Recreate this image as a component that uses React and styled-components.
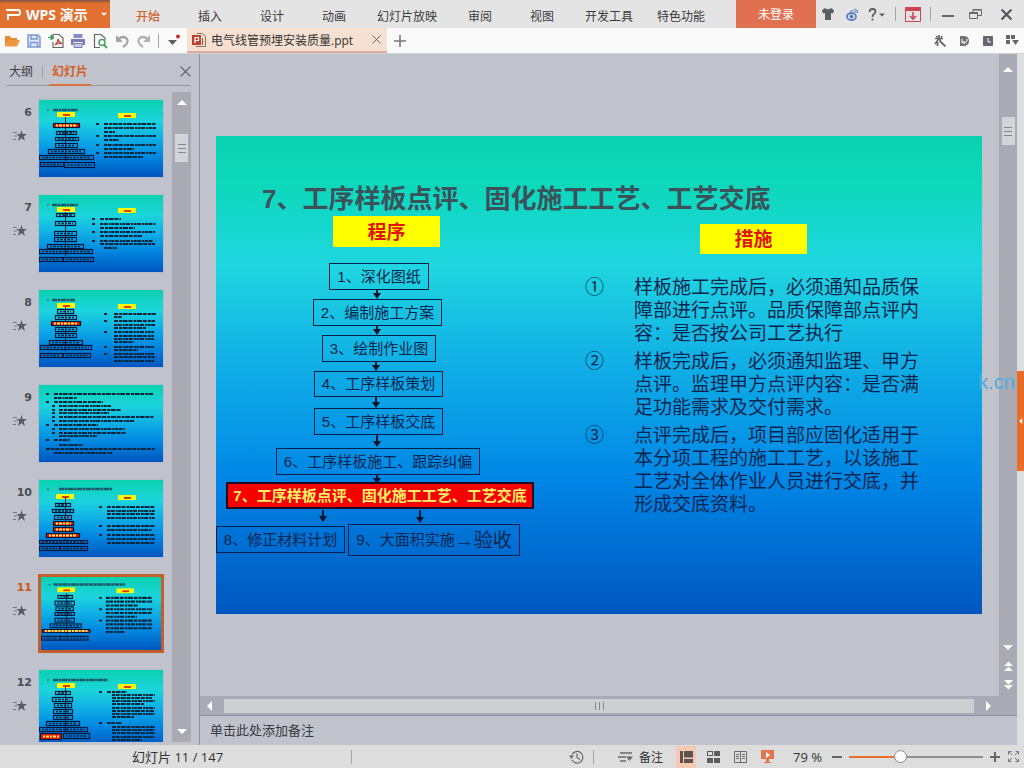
import React, { useState } from "react";
import styled, { createGlobalStyle } from "styled-components";

const GlobalStyle = createGlobalStyle`
  * {
    box-sizing: border-box;
  }
  body {
    margin: 0;
    overflow: hidden;
    font-family: "Open Sans", "Noto Sans CJK SC", sans-serif;
    font-size: 12px;
    color: #333;
  }
  button {
    margin: 0;
    padding: 0;
    border: 0;
    background: none;
    font: inherit;
    color: inherit;
  }
  svg {
    display: block;
  }
`;

const Page = styled.div`
  display: flex;
  flex-direction: column;
  height: 100vh;
  background-color: #c0c3cc;
`;

/* title bar */

const TitleBar = styled.header`
  display: flex;
  flex: none;
  height: 28px;
  padding-right: 3px;
  background-color: #e4e4e5;
`;

const AppButton = styled.button`
  display: flex;
  align-items: center;
  width: 110px;
  padding-left: 6px;
  gap: 5px;
  background-color: #e27030;
  color: #fff;
  font-size: 14px;
  font-weight: bold;
  white-space: nowrap;
  box-shadow: inset 0 3px 2px -1px #8a5a44;

  svg:last-child {
    margin-left: auto;
    margin-right: 3px;
  }
`;

const Menu = styled.nav`
  display: flex;
  flex: 1;
  padding-left: 7px;
`;

const MenuItem = styled.button`
  min-width: 62px;
  padding: 4px 12px 0;
  color: ${(props) => (props.$active ? "#d2622c" : "#3a3a3a")};
  font-weight: ${(props) => (props.$active ? 500 : 400)};
`;

const LoginButton = styled.button`
  width: 80px;
  background-color: #e07150;
  color: #fff;
`;

const IconButton = styled.button`
  display: flex;
  align-items: center;
  justify-content: center;
  width: ${(props) => props.$width || 24}px;
  background-color: ${(props) => (props.$active ? "#f6c9b2" : "transparent")};
`;

const Separator = styled.span`
  width: 1px;
  height: 14px;
  margin: 0 ${(props) => props.$space ?? 6}px;
  align-self: center;
  background-color: #a5a5a8;
`;

/* quick access bar */

const QuickBar = styled.div`
  display: flex;
  flex: none;
  height: 26px;
  background-color: #fafafb;
  border-bottom: 1px solid #cfd1d6;
`;

const QuickTools = styled.div`
  display: flex;
  width: 187px;
  padding-left: 1px;
`;

const FileTab = styled.div`
  display: flex;
  align-items: center;
  width: 200px;
  padding: 0 6px 0 5px;
  gap: 5px;
  background-color: #f5e0d1;
  border-bottom: 2px solid #dca9a4;
  white-space: nowrap;

  button {
    margin-left: auto;
  }
`;

const QuickRight = styled.div`
  display: flex;
  margin-left: auto;
`;

/* left panel */

const Body = styled.div`
  display: flex;
  flex: 1;
  min-height: 0;
`;

const SidePanel = styled.aside`
  display: flex;
  flex-direction: column;
  width: 200px;
  border-right: 1px solid #92959f;
`;

const PanelTabs = styled.div`
  display: flex;
  flex: none;
  align-items: center;
  height: 32px;
  margin: 0 8px 6px 6px;
  padding-top: 4px;
  border-bottom: 1px solid #9699a3;

  > button:last-child {
    margin-left: auto;
  }
`;

const PanelTab = styled.button`
  height: 28px;
  padding: 0 3px;
  color: ${(props) => (props.$active ? "#d65f26" : "#3e4046")};
  font-weight: ${(props) => (props.$active ? "bold" : "normal")};
  border-bottom: 2px solid
    ${(props) => (props.$active ? "#d8723f" : "transparent")};
`;

const PanelBody = styled.div`
  display: flex;
  flex: 1;
  min-height: 0;
  padding: 0 8px 3px 0;
`;

const SlideList = styled.ol`
  flex: 1;
  margin: 0;
  padding: 7px 0 0;
  list-style: none;
  overflow: hidden;
`;

const SlideItem = styled.li`
  display: flex;
  height: 95px;
`;

const SlideMark = styled.div`
  display: flex;
  flex-direction: column;
  align-items: flex-end;
  width: 38px;
  padding: 6px 6px 0 0;
  gap: 9px;
  font-family: "DejaVu Sans", sans-serif;
  font-size: 11px;
  font-weight: bold;
  line-height: 16px;
  color: ${(props) => (props.$active ? "#c8591f" : "#4b4d54")};

  svg {
    margin-right: 5px;
  }
`;

const Thumb = styled.button`
  width: 126px;
  height: 79px;
  border: ${(props) =>
    props.$active ? "3px solid #c35f28" : "1px solid #b5bbc9"};
  overflow: hidden;
`;

const SideScroll = styled.div`
  display: flex;
  flex-direction: column;
  align-items: center;
  justify-content: space-between;
  width: 19px;
  padding: 6px 0;
  background-color: #a9aab4;
`;

const ScrollGroup = styled.div`
  display: flex;
  flex-direction: column;
  align-items: center;
  gap: ${(props) => props.$gap}px;
`;

const ScrollThumb = styled.div`
  display: flex;
  flex-direction: column;
  align-items: center;
  justify-content: center;
  width: 13px;
  height: 28px;
  background-color: #d3d4d7;
`;

/* editing area */

const Main = styled.main`
  display: flex;
  flex: 1;
  flex-direction: column;
  min-width: 0;
`;

const Stage = styled.div`
  display: flex;
  flex: 1;
  min-height: 0;
`;

const Canvas = styled.div`
  display: flex;
  flex: 1;
  align-items: center;
  justify-content: center;
  min-width: 0;
  padding-right: 1px;
  overflow: hidden;
`;

const MainScroll = styled(SideScroll)`
  width: 18px;
  padding: 11px 0 6px;
`;

const HScroll = styled.div`
  display: flex;
  flex: none;
  align-items: center;
  height: 20px;
  padding: 0 24px 0 5px;
  gap: 9px;
  background-color: #a9acb6;
  border-bottom: 1px solid #8f929c;
`;

const HScrollThumb = styled.div`
  display: flex;
  flex: 1;
  align-items: center;
  justify-content: center;
  height: 14px;
  background-color: #cdd0d1;
`;

const Notes = styled.div`
  flex: none;
  height: 29px;
  padding-left: 10px;
  font-size: 13px;
  line-height: 28px;
  color: #383a42;
`;

const Edge = styled.div`
  display: flex;
  align-items: center;
  width: 7px;
  background-color: #dddee0;
`;

const EdgeHandle = styled.button`
  display: flex;
  align-items: center;
  justify-content: center;
  width: 7px;
  height: 100px;
  margin-top: 42px;
  background-color: #e86e28;
`;

/* slide */

const Slide = styled.section`
  position: relative;
  flex: none;
  width: 766px;
  height: 478px;
  background: linear-gradient(
    #0ad2b0 0%,
    #0cd8ba 10%,
    #20d6e0 27%,
    #10aee6 48%,
    #0086e6 72%,
    #0056bf 100%
  );
  font-family: "Liberation Sans", "Noto Sans CJK SC", sans-serif;
  color: #06264f;
`;

const SlideTitle = styled.h1`
  margin: 0;
  padding: 44px 0 0 46px;
  font-size: 26px;
  line-height: 38px;
  color: #3c5259;
  white-space: nowrap;
`;

const Node = styled.div`
  position: absolute;
  left: ${(props) => props.$x}px;
  top: ${(props) => props.$y}px;
  display: flex;
  align-items: center;
  justify-content: center;
  width: ${(props) => props.$w}px;
  height: ${(props) => props.$h}px;
  padding-bottom: 3px;
  border: 1px solid #06204a;
  font-size: 15px;
  white-space: nowrap;
`;

const HotNode = styled(Node)`
  border: 2px solid #1c0a20;
  background-color: #f60000;
  color: #ffee66;
  font-weight: bold;
`;

const LabelNode = styled(Node)`
  border: 0;
  background-color: #ffff00;
  color: #e01400;
  font-size: 19px;
  font-weight: bold;
`;

const BigText = styled.span`
  font-size: 19px;
`;

const Connectors = styled.svg`
  position: absolute;
  left: 0;
  top: 0;
`;

const Measures = styled.ol`
  display: flex;
  flex-direction: column;
  width: 340px;
  margin: 58px 0 0 369px;
  padding: 0;
  gap: 5px;
  list-style: none;
  font-size: 19px;
  line-height: 23px;
`;

const Measure = styled.li`
  display: grid;
  grid-template-columns: 49px 1fr;
`;

const Watermark = styled.div`
  position: absolute;
  right: 9px;
  top: 371px;
  font-family: "Liberation Sans", sans-serif;
  font-size: 20px;
  line-height: 23px;
  color: #4aaee0;
`;

/* status bar */

const StatusBar = styled.footer`
  display: flex;
  flex: none;
  align-items: center;
  height: 23px;
  padding-right: 1px;
  background-color: #dddddd;
  font-size: 13px;
`;

const PageInfo = styled.div`
  width: 351px;
  padding-left: 132px;
`;

const StatusRight = styled.div`
  display: flex;
  align-items: center;
  height: 100%;
  margin-left: auto;

  > button {
    height: 22px;
  }
`;

const NotesButton = styled.button`
  display: flex;
  align-items: center;
  margin: 0 13px 0 18px;
  gap: 6px;
  font-size: 12px;
`;

const ZoomValue = styled.output`
  width: 38px;
  margin-left: 9px;
  white-space: nowrap;
`;

const ZoomSlider = styled.input`
  appearance: none;
  width: 134px;
  height: 16px;
  margin: 0 4px 0 6px;
  background: linear-gradient(90deg, #e8722c 38%, #8f8f92 38%) center / 100% 2px
    no-repeat;

  &::-webkit-slider-thumb {
    appearance: none;
    width: 13px;
    height: 13px;
    border: 1px solid #8b8b8b;
    border-radius: 50%;
    background-color: #fbfbfb;
  }
`;

const menuItems = [
  "开始",
  "插入",
  "设计",
  "动画",
  "幻灯片放映",
  "审阅",
  "视图",
  "开发工具",
  "特色功能",
];

const nodes = [
  { x: 113, y: 127, w: 100, h: 27, text: "1、深化图纸" },
  { x: 97, y: 163, w: 129, h: 27, text: "2、编制施工方案" },
  { x: 106, y: 199, w: 114, h: 27, text: "3、绘制作业图" },
  { x: 98, y: 235, w: 129, h: 26, text: "4、工序样板策划" },
  { x: 98, y: 272, w: 129, h: 27, text: "5、工序样板交底" },
  { x: 60, y: 312, w: 204, h: 27, text: "6、工序样板施工、跟踪纠偏" },
  { x: 0, y: 390, w: 129, h: 27, text: "8、修正材料计划" },
];

// x, start y, end y
const arrows = [
  [161, 154, 163],
  [161, 190, 199],
  [160, 226, 235],
  [160, 261, 272],
  [161, 299, 311],
  [161, 339, 348],
  [107, 374, 386],
  [204, 374, 387],
];

const measures = [
  ["①", "样板施工完成后，必须通知品质保障部进行点评。品质保障部点评内容：是否按公司工艺执行"],
  ["②", "样板完成后，必须通知监理、甲方点评。监理甲方点评内容：是否满足功能需求及交付需求。"],
  ["③", "点评完成后，项目部应固化适用于本分项工程的施工工艺，以该施工工艺对全体作业人员进行交底，并形成交底资料。"],
];

// boxes: x, y, w, h, hot    lines: x, y, w    dots: x, y
const thumbs = [
  {
    no: 6,
    title: [14, 10, 25],
    labels: [[18, 12], [79, 13]],
    boxes: [[14, 23, 27, 5, 1], [17, 31, 21, 4], [16, 37, 24, 4], [16, 43, 23, 5], [9, 49, 37, 5], [0, 55, 55, 5], [1, 62, 24, 5], [25, 62, 31, 6]],
    lines: [[65, 24, 52], [65, 28, 52], [65, 32, 11], [65, 36, 52], [65, 40, 15], [65, 45, 52], [65, 49, 30], [65, 53, 52], [65, 57, 39]],
    dots: [[57, 24], [57, 36], [57, 45], [57, 53]],
  },
  {
    no: 7,
    title: [13, 10, 26],
    labels: [[18, 12], [79, 13]],
    boxes: [[17, 18, 19, 4], [16, 26, 21, 5], [15, 36, 23, 5], [15, 42, 23, 5], [8, 49, 37, 5], [0, 54, 54, 5], [0, 62, 24, 5], [24, 62, 31, 5]],
    lines: [[61, 24, 21], [61, 29, 56], [61, 33, 35], [61, 37, 55], [61, 41, 42], [61, 46, 53], [61, 49, 55], [65, 53, 13]],
    dots: [[53, 24], [53, 29], [53, 37], [53, 46]],
  },
  {
    no: 8,
    title: [13, 10, 23],
    labels: [[18, 13], [79, 14]],
    boxes: [[18, 19, 17, 5], [16, 25, 22, 5], [12, 31, 30, 5, 1], [16, 37, 22, 5], [16, 43, 22, 5], [10, 50, 34, 5], [1, 55, 52, 5], [1, 63, 23, 5], [24, 63, 28, 5]],
    lines: [[75, 24, 42], [75, 27, 8], [75, 31, 41], [75, 35, 41], [75, 38, 32], [75, 42, 40], [75, 46, 40], [75, 49, 40], [75, 52, 20], [75, 57, 40], [75, 60, 24], [75, 64, 40], [75, 67, 41], [75, 71, 40]],
    dots: [[65, 24], [65, 31], [65, 42], [65, 57], [65, 64]],
  },
  {
    no: 9,
    title: null,
    labels: [],
    boxes: [],
    lines: [[15, 9, 99], [15, 13, 23], [15, 17, 49], [20, 21, 52], [20, 25, 62], [20, 28, 50], [20, 32, 95], [20, 36, 76], [15, 40, 44], [20, 44, 66], [20, 48, 67], [20, 51, 38], [15, 55, 16], [20, 60, 24], [7, 64, 109], [15, 68, 58]],
    dots: [[7, 9], [7, 17], [13, 21], [13, 25], [13, 28], [13, 32], [13, 36], [7, 40], [13, 44], [13, 48], [7, 55]],
  },
  {
    no: 10,
    title: [20, 9, 53],
    labels: [[17, 14], [79, 15]],
    boxes: [[16, 23, 16, 4], [13, 29, 22, 4], [15, 35, 18, 5], [14, 41, 21, 5, 1], [14, 47, 21, 5, 1], [7, 53, 34, 5, 1], [0, 60, 49, 4], [0, 66, 21, 5], [21, 66, 28, 5]],
    lines: [[68, 27, 48], [68, 31, 48], [68, 34, 48], [68, 38, 48], [68, 46, 48], [68, 50, 45], [68, 55, 48], [68, 59, 48], [68, 63, 48]],
    dots: [[60, 27], [60, 46], [60, 55]],
  },
  {
    no: 11,
    title: [13, 8, 74],
    labels: [[17, 11], [78, 12]],
    boxes: [[17, 19, 16, 4], [14, 25, 21, 5], [15, 31, 19, 5], [14, 37, 21, 4], [14, 43, 21, 5], [9, 49, 33, 5], [1, 55, 50, 4, 1], [0, 62, 20, 5], [20, 62, 29, 5]],
    lines: [[67, 22, 48], [67, 26, 48], [67, 30, 34], [67, 34, 48], [67, 38, 48], [67, 42, 32], [67, 46, 48], [67, 50, 48], [67, 54, 48], [67, 58, 20]],
    dots: [[60, 22], [60, 34], [60, 46]],
  },
  {
    no: 12,
    title: [14, 10, 55],
    labels: [[18, 13], [79, 14]],
    boxes: [[16, 21, 16, 4], [13, 27, 21, 5], [15, 33, 18, 5], [14, 39, 20, 5], [14, 45, 20, 5], [7, 51, 34, 5], [0, 57, 49, 5], [1, 63, 22, 7, 1], [24, 63, 27, 6]],
    lines: [[68, 22, 20], [73, 25, 43], [73, 28, 40], [73, 31, 43], [73, 34, 32], [73, 38, 43], [73, 41, 42], [73, 44, 43], [73, 47, 22], [68, 53, 15], [73, 57, 43], [73, 60, 43], [73, 63, 43], [73, 67, 43], [73, 70, 30]],
    dots: [[60, 22], [60, 53]],
  },
];

function ThumbDrawing({ slide }) {
  const gradientId = `thumb-bg-${slide.no}`;
  return (
    <svg width="100%" height="100%" viewBox="0 0 124 77" preserveAspectRatio="none">
      <defs>
        <linearGradient id={gradientId} x1="0" y1="0" x2="0" y2="1">
          <stop offset="0" stopColor="#0ad2b0" />
          <stop offset="0.27" stopColor="#1cd4dc" />
          <stop offset="0.5" stopColor="#10aee6" />
          <stop offset="0.74" stopColor="#0086e0" />
          <stop offset="1" stopColor="#0056bf" />
        </linearGradient>
      </defs>
      <rect width="124" height="77" fill={`url(#${gradientId})`} />
      {slide.title && (
        <g stroke="#1c5a68" strokeWidth="2.6">
          <path d={`M8 ${slide.title[1]}h2`} strokeWidth="1" />
          <path d={`M${slide.title[0]} ${slide.title[1]}h${slide.title[2]}`} strokeDasharray="5 0.5 3 0.5" />
        </g>
      )}
      {slide.labels.map(([x, y]) => (
        <g key={x}>
          <rect x={x} y={y} width="18" height="5" fill="#ffff00" />
          <rect x={x + 6} y={y + 2} width="7" height="2" fill="#e03a00" />
        </g>
      ))}
      {slide.boxes.length > 0 && <path d="M26.500 17v44" stroke="#05264a" />}
      {slide.boxes.map(([x, y, w, h, hot]) => (
        <g key={`${x}-${y}`}>
          <rect
            x={x + 0.5}
            y={y + 0.5}
            width={w - 1}
            height={h - 1}
            fill={hot ? "#e81800" : "none"}
            stroke="#04163a"
            strokeWidth="1.2"
          />
          <path
            d={`M${x + 3} ${y + h / 2}h${w - 6}`}
            stroke={hot ? "#ffe860" : "#05264a"}
            strokeWidth={hot ? 2 : 1.5}
            strokeDasharray="2 1 3 1"
          />
        </g>
      ))}
      {slide.lines.map(([x, y, w], i) => (
        <path
          key={i}
          d={`M${x} ${y}h${w}`}
          stroke="#04263f"
          strokeWidth="2.2"
          strokeDasharray={i % 2 ? "3 0.6 4 1 2 0.6" : "4 1 3 0.6 5 0.8"}
        />
      ))}
      {slide.dots.map(([x, y]) => (
        <path key={`${x}-${y}`} d={`M${x} ${y}h3`} stroke="#04263f" strokeWidth="2" />
      ))}
    </svg>
  );
}

const StarIcon = () => (
  <svg width="14" height="12" viewBox="0 0 14 12">
    <path d="M0 2.500h4M1 6h3M0 9.500h3" stroke="#74767e" />
    <path d="M8.500 0l1.300 4H14l-3.300 2.500L12 11 8.500 8.300 4.800 11l1.400-4.500L3.500 4h3.800z" fill="#5b5d65" />
  </svg>
);

const Triangle = ({ dir = "up", color = "#fff", size = 10 }) => {
  const paths = {
    up: "M0 7L5 2l5 5z",
    down: "M0 3l5 5 5-5z",
    left: "M7 0L2 5l5 5z",
    right: "M3 0l5 5-5 5z",
  };
  return (
    <svg width={size} height={size} viewBox="0 0 10 10">
      <path d={paths[dir]} fill={color} />
    </svg>
  );
};

const DoubleTriangle = ({ down }) => (
  <svg width="9" height="10" viewBox="0 0 9 10">
    <path
      d={down ? "M0 0h9L4.500 4.500zM0 5h9L4.500 9.500z" : "M0 5h9L4.500 .5zM0 10h9L4.500 5.500z"}
      fill="#fff"
    />
  </svg>
);

const Grip = ({ vertical }) => (
  <svg width="10" height="10" viewBox="0 0 10 10">
    <path
      d={vertical ? "M1.500 1v8M5.500 1v8M9.500 1v8" : "M1 1.500h8M1 5.500h8M1 9.500h8"}
      stroke="#85878f"
    />
  </svg>
);

const CrossIcon = ({ size = 9, width = 1, color = "#55565c" }) => (
  <svg width={size} height={size} viewBox="0 0 10 10">
    <path d="M.5 .5l9 9M9.500 .5l-9 9" stroke={color} strokeWidth={width} />
  </svg>
);

const LogoIcon = () => (
  <svg width="15" height="13" viewBox="0 0 15 13" fill="none" stroke="#fff" strokeWidth="2">
    <path d="M0 2h12q2 0 2 2v1q0 2-2 2H2v5" />
  </svg>
);

const quickIcons = [
  {
    name: "打开",
    drawing: (
      <>
        <path d="M1 13V3h5l1 2h6v2H5z" fill="#e88a32" />
        <path d="M4.500 7H16l-3 6.500H1z" fill="#f0983e" />
      </>
    ),
  },
  {
    name: "保存",
    drawing: (
      <g fill="none" stroke="#7d9bd0" strokeWidth="1.5">
        <path d="M2 2h10l2 2v10H2z" fill="#dbe6f8" />
        <path d="M5 2v4h6V2M4.500 14V9.500h7V14" />
      </g>
    ),
  },
  {
    name: "输出为PDF",
    drawing: (
      <g fill="none">
        <path d="M5 5V1.500h6l4 3.500v9.500H5V9" stroke="#666" strokeWidth="1.200" />
        <path d="M0 4.500h5M3 2l3 2.500L3 7z" stroke="#3c9a50" fill="#3c9a50" />
        <path d="M7 12q3-2 3-6 1 4 4 4.500-4-.5-7 1.500" stroke="#d04848" strokeWidth="1.400" />
      </g>
    ),
  },
  {
    name: "打印",
    drawing: (
      <>
        <path d="M3.500 1h9v4h-9z" fill="#8a8cc4" />
        <path d="M1 6h14v6h-2.500V9h-9v3H1z" fill="#7a7cba" />
        <path d="M4 10.500h8v4H4z" fill="#c8c9e6" stroke="#7a7cba" />
      </>
    ),
  },
  {
    name: "打印预览",
    drawing: (
      <g fill="none">
        <path d="M13 7V5l-4-3.500H2.500v13H8" stroke="#666" strokeWidth="1.200" />
        <circle cx="10" cy="9.500" r="3" stroke="#4ca060" strokeWidth="1.500" />
        <path d="M12 12l3 3" stroke="#4ca060" strokeWidth="1.800" />
      </g>
    ),
  },
  {
    name: "撤销",
    drawing: (
      <>
        <path d="M4 6q6-4 9 0 2 4-4 8" fill="none" stroke="#a4a5a9" strokeWidth="2.200" />
        <path d="M2 2v7h7z" fill="#a4a5a9" />
      </>
    ),
  },
  {
    name: "恢复",
    drawing: (
      <>
        <path d="M12 6q-6-4-9 0-2 4 4 8" fill="none" stroke="#b0b1b5" strokeWidth="2.200" />
        <path d="M14 2v7H7z" fill="#b0b1b5" />
      </>
    ),
  },
];

function App() {
  const [activeMenu, setActiveMenu] = useState("开始");
  const [current, setCurrent] = useState(11);
  const [zoom, setZoom] = useState(79);

  return (
    <Page>
      <GlobalStyle />
      <TitleBar>
        <AppButton>
          <LogoIcon />
          WPS 演示
          <Triangle dir="down" size={6} />
        </AppButton>
        <Menu>
          {menuItems.map((item) => (
            <MenuItem key={item} $active={item === activeMenu} onClick={() => setActiveMenu(item)}>
              {item}
            </MenuItem>
          ))}
        </Menu>
        <LoginButton>未登录</LoginButton>
        <IconButton aria-label="皮肤">
          <svg width="12" height="12" viewBox="0 0 12 12">
            <path d="M3 0q3 2.500 6 0l3 2-1 3.500-2-.5v7H3V5l-2 .5L0 2z" fill="#5d5e62" />
          </svg>
        </IconButton>
        <IconButton aria-label="微博">
          <svg width="13" height="13" viewBox="0 0 13 13" fill="none" stroke="#5b82c4">
            <ellipse cx="5.500" cy="8.500" rx="4.500" ry="3.500" strokeWidth="1.800" />
            <circle cx="5.500" cy="8.500" r="1.500" fill="#3d66b0" />
            <path d="M4 3.500q3-2 4 0M8 1q4 0 4 4M8.500 3q2 0 1.800 2" />
          </svg>
        </IconButton>
        <IconButton $width={25} aria-label="帮助">
          <svg width="17" height="13" viewBox="0 0 17 13" fill="none">
            <path d="M1.500 4q0-3 3-3t3 2.500q0 1.500-1.500 2.500T4.500 9M4.500 10.500v2" stroke="#5d5e62" strokeWidth="1.800" />
            <path d="M11 5.500h6l-3 3z" fill="#5d5e62" />
          </svg>
        </IconButton>
        <Separator />
        <IconButton $width={22} aria-label="下载">
          <svg width="16" height="15" viewBox="0 0 16 15" fill="none" stroke="#cf4350">
            <path d="M.5 .5h15v14H.5z" />
            <path d="M0 2h16" strokeWidth="4" />
            <path d="M8 5v7M5 9l3 3 3-3" strokeWidth="1.600" />
          </svg>
        </IconButton>
        <Separator />
        <IconButton $width={22} aria-label="最小化">
          <svg width="12" height="12" viewBox="0 0 12 12">
            <path d="M0 8h12" stroke="#66676b" strokeWidth="2" />
          </svg>
        </IconButton>
        <IconButton $width={32} aria-label="还原">
          <svg width="13" height="12" viewBox="0 0 13 12" fill="none" stroke="#66676b">
            <path d="M.5 4.500h8v6h-8zM.5 5.500h8M4 4V1.500h8.500v6H9M4 2h8" />
          </svg>
        </IconButton>
        <IconButton $width={30} aria-label="关闭">
          <CrossIcon size={11} width={2} />
        </IconButton>
      </TitleBar>

      <QuickBar>
        <QuickTools>
          {quickIcons.map((icon) => (
            <IconButton key={icon.name} $width={22} aria-label={icon.name}>
              <svg width="16" height="16" viewBox="0 0 16 16">
                {icon.drawing}
              </svg>
            </IconButton>
          ))}
          <Separator $space={3} />
          <IconButton $width={24} aria-label="自定义">
            <svg width="14" height="14" viewBox="0 0 14 14">
              <path d="M1 6h9l-4.500 5z" fill="#5d5e62" />
              <circle cx="11" cy="2.500" r="2" fill="#c0302c" />
            </svg>
          </IconButton>
        </QuickTools>
        <FileTab>
          <svg width="14" height="14" viewBox="0 0 14 14" fill="none">
            <path d="M5 .5h5.500l3 3v10H4" stroke="#8a6a62" />
            <path d="M0 2h9v10H0z" fill="#b8432f" />
            <path d="M3 10V4.500h3.500v3H3" stroke="#fff" strokeWidth="1.200" />
            <path d="M10.500 5v7" stroke="#b8432f" />
          </svg>
          电气线管预埋安装质量.ppt
          <button aria-label="关闭文档">
            <CrossIcon />
          </button>
        </FileTab>
        <IconButton $width={26} aria-label="新建">
          <svg width="12" height="12" viewBox="0 0 12 12">
            <path d="M0 6h12M6 0v12" stroke="#77787c" strokeWidth="1.600" />
          </svg>
        </IconButton>
        <QuickRight>
          <IconButton aria-label="魔术棒">
            <svg width="12" height="12" viewBox="0 0 12 12" fill="none" stroke="#66676e">
              <path d="M5 0v3M1 3.500h8M5 3.500L1 9M5 3.500l1.500 2" strokeWidth="1.600" />
              <path d="M5.500 5.500l6 6M2.500 1l1 1.500M8 1L7 2.500M3.500 7v4" strokeWidth="1.800" />
            </svg>
          </IconButton>
          <IconButton aria-label="文档助手">
            <svg width="11" height="12" viewBox="0 0 11 12">
              <path d="M1 1h5q4 1 4 5t-4 5H1z" fill="#70717a" />
              <path d="M3 4v4l2-2v3l3-3V4" stroke="#fff" fill="none" />
            </svg>
          </IconButton>
          <IconButton aria-label="历史">
            <svg width="10" height="10" viewBox="0 0 10 10">
              <rect width="10" height="10" rx="1" fill="#66676e" />
              <path d="M5 2v4h3" stroke="#fff" fill="none" />
            </svg>
          </IconButton>
          <IconButton aria-label="窗口">
            <svg width="13" height="11" viewBox="0 0 13 11" fill="#66676e">
              <path d="M0 0h4v4H0zM5 0h4v4H5zM0 5h4v4H0zM6 5h7l-3.500 5z" />
            </svg>
          </IconButton>
        </QuickRight>
      </QuickBar>

      <Body>
        <SidePanel>
          <PanelTabs>
            <PanelTab>大纲</PanelTab>
            <Separator $space={6} />
            <PanelTab $active>幻灯片</PanelTab>
            <button aria-label="关闭窗格">
              <CrossIcon size={11} />
            </button>
          </PanelTabs>
          <PanelBody>
            <SlideList>
              {thumbs.map((slide) => (
                <SlideItem key={slide.no}>
                  <SlideMark $active={slide.no === current}>
                    {slide.no}
                    <StarIcon />
                  </SlideMark>
                  <Thumb
                    $active={slide.no === current}
                    aria-label={`幻灯片 ${slide.no}`}
                    onClick={() => setCurrent(slide.no)}
                  >
                    <ThumbDrawing slide={slide} />
                  </Thumb>
                </SlideItem>
              ))}
            </SlideList>
            <SideScroll>
              <ScrollGroup $gap={26}>
                <Triangle />
                <ScrollThumb>
                  <Grip />
                </ScrollThumb>
              </ScrollGroup>
              <Triangle dir="down" />
            </SideScroll>
          </PanelBody>
        </SidePanel>

        <Main>
          <Stage>
            <Canvas>
              <Slide>
                <SlideTitle>7、工序样板点评、固化施工工艺、工艺交底</SlideTitle>
                <Measures>
                  {measures.map(([mark, text]) => (
                    <Measure key={mark}>
                      <span>{mark}</span>
                      <span>{text}</span>
                    </Measure>
                  ))}
                </Measures>
                <LabelNode $x={117} $y={80} $w={107} $h={31}>
                  程序
                </LabelNode>
                <LabelNode $x={484} $y={88} $w={107} $h={30}>
                  措施
                </LabelNode>
                {nodes.map((node) => (
                  <Node key={node.text} $x={node.x} $y={node.y} $w={node.w} $h={node.h}>
                    {node.text}
                  </Node>
                ))}
                <HotNode $x={10} $y={346} $w={308} $h={27}>
                  7、工序样板点评、固化施工工艺、工艺交底
                </HotNode>
                <Node $x={132} $y={388} $w={172} $h={32}>
                  9、大面积实施
                  <BigText>→验收</BigText>
                </Node>
                <Connectors width="330" height="400" viewBox="0 0 330 400">
                  {arrows.map(([x, from, to]) => (
                    <g key={`${x}-${from}`} fill="#06142c">
                      <rect x={x - 1} y={from} width="2" height={to - from - 4} />
                      <path d={`M${x - 4} ${to - 6}h8l-4 6z`} />
                    </g>
                  ))}
                </Connectors>
              </Slide>
            </Canvas>
            <MainScroll>
              <ScrollGroup $gap={42}>
                <Triangle />
                <ScrollThumb>
                  <Grip />
                </ScrollThumb>
              </ScrollGroup>
              <ScrollGroup $gap={9}>
                <Triangle dir="down" />
                <DoubleTriangle />
                <DoubleTriangle down />
              </ScrollGroup>
            </MainScroll>
          </Stage>
          <HScroll>
            <Triangle dir="left" />
            <HScrollThumb>
              <Grip vertical />
            </HScrollThumb>
            <Triangle dir="right" />
          </HScroll>
          <Notes>单击此处添加备注</Notes>
        </Main>
        <Edge>
          <EdgeHandle aria-label="展开任务窗格">
            <Triangle dir="left" size={6} />
          </EdgeHandle>
        </Edge>
        <Watermark>k.cn</Watermark>
      </Body>

      <StatusBar>
        <PageInfo>幻灯片 {current} / 147</PageInfo>
        <Separator $space={0} />
        <StatusRight>
          <IconButton $width={20} aria-label="历史版本">
            <svg width="15" height="14" viewBox="0 0 15 14" fill="none" stroke="#6b6b6e">
              <path d="M3 4.500A5.800 5.800 0 1 1 3 10M8 3.500V7.500l3 2" strokeWidth="1.200" />
              <path d="M0 5.500h5L2.500 9z" fill="#6b6b6e" stroke="none" />
            </svg>
          </IconButton>
          <Separator />
          <NotesButton>
            <svg width="15" height="12" viewBox="0 0 15 12">
              <path d="M2 2h12M0 6h8M2 10h6" stroke="#6b6b6e" strokeWidth="1.300" />
              <path d="M8 5.500h7L11.500 10z" fill="#6b6b6e" />
            </svg>
            备注
          </NotesButton>
          <IconButton $width={20} $active aria-label="普通视图">
            <svg width="13" height="12" viewBox="0 0 13 12" fill="#5c5350">
              <path d="M0 0h3v12H0zM4 0h9v6.500H4zM4 8h9v4H4z" />
            </svg>
          </IconButton>
          <IconButton $width={34} aria-label="浏览视图">
            <svg width="13" height="12" viewBox="0 0 13 12" fill="#5c5c5f">
              <path d="M0 0h6v5H0zM7 0h6v5H7zM0 7h6v5H0zM7 7h6v5H7z" />
              <path d="M1 1h4v3H1z" fill="#ddd" />
            </svg>
          </IconButton>
          <IconButton $width={20} aria-label="阅读视图">
            <svg width="13" height="12" viewBox="0 0 13 12" fill="none" stroke="#6b6b6e">
              <path d="M.5 .5h6v11h-6zM6.500 .5h6v11h-6zM2 3.500h3M2 5.500h3M2 7.500h3M8 3.500h3M8 5.500h3M8 7.500h3" />
            </svg>
          </IconButton>
          <IconButton $width={34} aria-label="放映">
            <svg width="13" height="13" viewBox="0 0 13 13">
              <path d="M0 0h13v9H8v3h2v1H3v-1h2V9H0z" fill="#e2764a" />
              <path d="M5 2l4 3-4 3z" fill="#fff" />
            </svg>
          </IconButton>
          <ZoomValue>{zoom} %</ZoomValue>
          <IconButton $width={12} aria-label="缩小" onClick={() => setZoom(zoom - 1)}>
            <svg width="10" height="10" viewBox="0 0 10 10">
              <path d="M0 5h10" stroke="#66676b" strokeWidth="2" />
            </svg>
          </IconButton>
          <ZoomSlider
            type="range"
            aria-label="显示比例"
            min="10"
            max="195"
            value={zoom}
            onChange={(e) => setZoom(Number(e.target.value))}
          />
          <IconButton $width={16} aria-label="放大" onClick={() => setZoom(zoom + 1)}>
            <svg width="10" height="10" viewBox="0 0 10 10">
              <path d="M0 5h10M5 0v10" stroke="#66676b" strokeWidth="2" />
            </svg>
          </IconButton>
          <IconButton $width={20} aria-label="适应窗口">
            <svg width="11" height="11" viewBox="0 0 11 11" fill="none" stroke="#77787c">
              <path d="M.5 3.500v-3h3M7.500 .5h3v3M10.500 7.500v3h-3M3.500 10.500h-3v-3M1 1l3 3M10 1L7 4M10 10L7 7M1 10l3-3" />
            </svg>
          </IconButton>
        </StatusRight>
      </StatusBar>
    </Page>
  );
}

export default App;
